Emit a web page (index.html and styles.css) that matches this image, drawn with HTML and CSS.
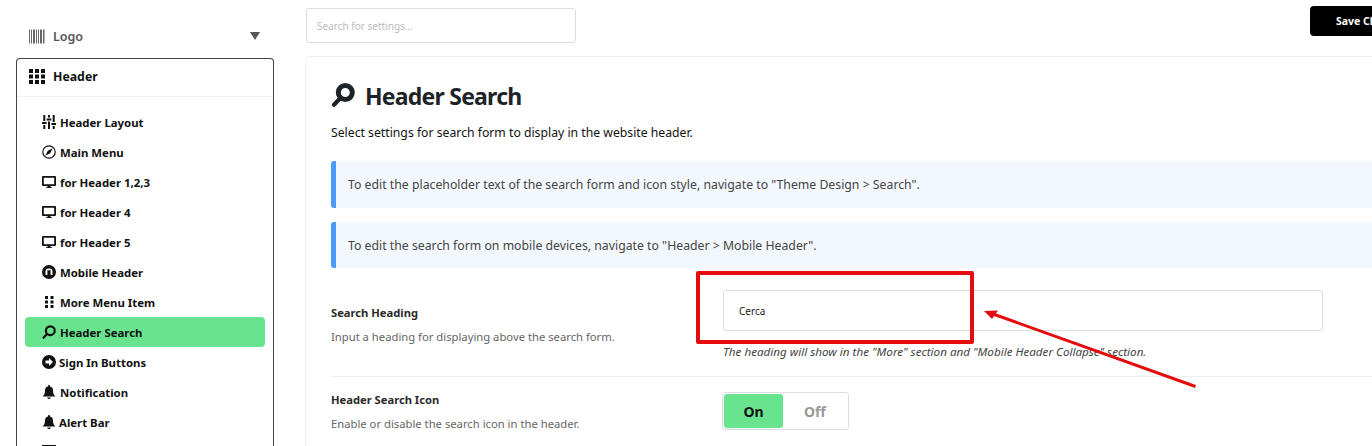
FILE: index.html
```html
<!DOCTYPE html>
<html lang="en">
<head>
<meta charset="utf-8">
<title>Header Search</title>
<link rel="stylesheet" href="styles.css">
</head>
<body>
<div class="page">
  <aside class="sidebar">
    <div class="group-closed">
      <svg class="gicon" viewBox="0 0 16 14"><path d="M0 0h1v14H0zM2 0h1v14H2zM4 0h2v14H4zM7 0h1v14H7zM9 0h1v14H9zM11 0h2v14h-2zM14 0h1.500v14H14z"/></svg>
      <span class="group-name">Logo</span>
      <svg class="caret" viewBox="0 0 10 8"><path d="M0 0h10L5 8z"/></svg>
    </div>
    <div class="group">
      <div class="group-head">
        <svg class="gicon dark" viewBox="0 0 16 15"><path d="M0 0h4v4H0zM6 0h4v4H6zM12 0h4v4h-4zM0 5.500h4v4H0zM6 5.500h4v4H6zM12 5.500h4v4h-4zM0 11h4v4H0zM6 11h4v4H6zM12 11h4v4h-4z"/></svg>
        <span>Header</span>
      </div>
      <nav class="items">
        <a class="item"><svg class="icon" viewBox="0 0 14 14"><path d="M1.300 0h2v6h-2zM0 7h4.600v2H0zM1.300 10h2v4h-2zM6 0h2v2.500H6zM4.700 3.500h4.600v2H4.700zM6 6.500h2V14H6zM10.700 0h2v7h-2zM9.400 8H14v2H9.400zM10.700 11h2v3h-2z"/></svg>Header Layout</a>
        <a class="item"><svg class="icon" viewBox="0 0 14 14"><circle class="ring" cx="7" cy="7" r="6.200"/><path d="M10.700 3.300 8.200 8.200 3.300 10.700 5.800 5.800z"/></svg>Main Menu</a>
        <a class="item"><svg class="icon" viewBox="0 0 14 14"><path fill-rule="evenodd" d="M1 1h12a1 1 0 0 1 1 1v8a1 1 0 0 1-1 1H8.500v1.200H10V13H4v-.8h1.500V11H1a1 1 0 0 1-1-1V2a1 1 0 0 1 1-1zm.8 1.800v6.400h10.400V2.800z"/></svg>for Header 1,2,3</a>
        <a class="item"><svg class="icon" viewBox="0 0 14 14"><path fill-rule="evenodd" d="M1 1h12a1 1 0 0 1 1 1v8a1 1 0 0 1-1 1H8.500v1.200H10V13H4v-.8h1.500V11H1a1 1 0 0 1-1-1V2a1 1 0 0 1 1-1zm.8 1.800v6.400h10.400V2.800z"/></svg>for Header 4</a>
        <a class="item"><svg class="icon" viewBox="0 0 14 14"><path fill-rule="evenodd" d="M1 1h12a1 1 0 0 1 1 1v8a1 1 0 0 1-1 1H8.500v1.200H10V13H4v-.8h1.500V11H1a1 1 0 0 1-1-1V2a1 1 0 0 1 1-1zm.8 1.800v6.400h10.400V2.800z"/></svg>for Header 5</a>
        <a class="item"><svg class="icon" viewBox="0 0 14 14"><path fill-rule="evenodd" d="M7 0a7 7 0 1 1 0 14A7 7 0 0 1 7 0zM3.500 10V6.500a3 3 0 0 1 3-3h1a3 3 0 0 1 3 3V10H8.600V5.300H5.400V10z"/></svg>Mobile Header</a>
        <a class="item"><svg class="icon" viewBox="0 0 14 14"><path d="M3 1h3v3H3zM8.500 1h3v3h-3zM3 5.500h3v3H3zM8.500 5.500h3v3h-3zM3 10h3v3H3zM8.500 10h3v3h-3z"/></svg>More Menu Item</a>
        <a class="item active"><svg class="icon" viewBox="0 0 14 14"><circle class="lens" cx="8.300" cy="5.700" r="4.400"/><path class="grip" d="M4.800 9.300 1.500 12.800"/></svg>Header Search</a>
        <a class="item tight"><svg class="icon" viewBox="0 0 14 14"><path fill-rule="evenodd" d="M7 0a7 7 0 1 1 0 14A7 7 0 0 1 7 0zM7 3v2.500H3.500v3H7V11l4-4z"/></svg>Sign In Buttons</a>
        <a class="item"><svg class="icon" viewBox="0 0 14 14"><path d="M7 0a1 1 0 0 1 1 1v.6a4 4 0 0 1 3 3.900c0 3.500 1 4.700 2.500 6H.5C2 10.200 3 9 3 5.500a4 4 0 0 1 3-3.900V1a1 1 0 0 1 1-1zM5.300 12.500h3.400A1.700 1.500 0 0 1 7 14a1.700 1.500 0 0 1-1.700-1.500z"/></svg>Notification</a>
        <a class="item tight"><svg class="icon" viewBox="0 0 14 14"><path d="M7 0a1 1 0 0 1 1 1v.6a4 4 0 0 1 3 3.900c0 3.500 1 4.700 2.500 6H.5C2 10.200 3 9 3 5.500a4 4 0 0 1 3-3.900V1a1 1 0 0 1 1-1zM5.300 12.500h3.400A1.700 1.500 0 0 1 7 14a1.700 1.500 0 0 1-1.700-1.500z"/></svg>Alert Bar</a>
        <a class="item"><svg class="icon" viewBox="0 0 14 14"><path d="M0 0h14v14H0z"/></svg></a>
      </nav>
    </div>
  </aside>
  <main class="main">
    <div class="topbar">
      <input class="search" type="text" placeholder="Search for settings...">
      <div class="save">Save Changes</div>
    </div>
    <section class="card">
      <h1 class="title"><svg class="title-icon" viewBox="0 0 24 24"><circle class="title-ring" cx="14.300" cy="9.500" r="7"/><path class="title-grip" d="M8 16.500 3 21.800"/></svg>Header Search</h1>
      <p class="lead">Select settings for search form to display in the website header.</p>
      <div class="notice">To edit the placeholder text of the search form and icon style, navigate to "Theme Design &gt; Search".</div>
      <div class="notice">To edit the search form on mobile devices, navigate to "Header &gt; Mobile Header".</div>
      <div class="row heading-row">
        <div class="label">
          <h3>Search Heading</h3>
          <p>Input a heading for displaying above the search form.</p>
        </div>
        <div class="control">
          <input class="text" type="text" value="Cerca">
          <p class="hint">The heading will show in the "More" section and "Mobile Header Collapse" section.</p>
        </div>
      </div>
      <div class="row icon-row">
        <div class="label">
          <h3>Header Search Icon</h3>
          <p>Enable or disable the search icon in the header.</p>
        </div>
        <div class="control">
          <div class="toggle"><span class="on">On</span><span class="off">Off</span></div>
        </div>
      </div>
    </section>
  </main>
</div>
<div class="mark"></div>
<svg class="arrow" viewBox="0 0 1372 446"><path class="shaft" d="M1195.500 386.500 993 314"/><path class="head" d="M984 311 998 310.500 992 319z"/></svg>
</body>
</html>
```
FILE: styles.css
```css
* { box-sizing: border-box; }
html, body { margin: 0; height: 446px; overflow: hidden; background: #fff; }
body { font-family: "Noto Sans", "Open Sans", sans-serif; color: #111; position: relative; }

.page { display: flex; height: 446px; width: 1372px; overflow: hidden; }

.sidebar { width: 305px; height: 446px; flex: none; padding: 24px 0 0 16px; overflow: hidden; }
.group-closed { display: flex; align-items: center; width: 258px; height: 24px; padding: 0 14px 0 13px; margin-bottom: 10px; color: #555; font-size: 12.500px; font-weight: 600; }
.gicon { width: 16px; height: 15px; margin-right: 8px; fill: #666; flex: none; }
.gicon.dark { fill: #111; }
.group-name { flex: 1; }
.caret { width: 10px; height: 8px; fill: #555; }

.group { width: 258px; height: 388px; border: 1px solid #444; border-bottom: 0; border-radius: 4px 4px 0 0; overflow: hidden; }
.group-head { display: flex; align-items: center; height: 38px; padding: 0 12px 2px; font-size: 12.300px; font-weight: 700; color: #111; border-bottom: 1px solid #f2f2f2; }
.items { padding: 10px 8px 0; }
.item { display: flex; align-items: center; height: 30px; padding: 0 17px; font-size: 11.400px; font-weight: 700; color: #111; border-radius: 4px; }
.item.tight .icon { margin-right: 3px; }
.item.active { background: #68e48f; }
.icon { width: 14px; height: 14px; margin-right: 4px; fill: #111; flex: none; }
.ring { fill: none; stroke: #111; stroke-width: 1.200; }
.lens { fill: none; stroke: #111; stroke-width: 2.200; }
.grip { fill: none; stroke: #111; stroke-width: 2.200; stroke-linecap: round; }

.main { flex: 1; min-width: 0; height: 446px; overflow: hidden; }
.topbar { display: flex; align-items: flex-start; justify-content: space-between; height: 56px; padding: 6px 0 0 1px; }
.search { width: 270px; height: 35px; margin-top: 2px; padding: 0 10px; border: 1px solid #ddd; border-radius: 3px; font: 10px "Noto Sans", sans-serif; }
.search::placeholder { color: #bbb; opacity: 1; }
.save { width: 62px; height: 30px; flex: none; overflow: hidden; border-radius: 4px 0 0 4px; background: #000; color: #fff; font-size: 10.500px; font-weight: 700; line-height: 30px; white-space: nowrap; padding-left: 26px; }

.card { margin-right: -40px; height: 390px; padding: 24px 26px 0 25px; border: 1px solid #eee; border-bottom: 0; border-radius: 5px 0 0 0; }
.title { display: flex; align-items: center; height: 30px; margin: 0 0 13px; font-size: 23px; font-weight: 700; letter-spacing: -.77px; color: #1d2327; line-height: 30px; }
.title-icon { width: 24px; height: 24px; margin: 0 10px 3px 0; flex: none; }
.title-ring { fill: none; stroke: #1d2327; stroke-width: 5; }
.title-grip { fill: none; stroke: #1d2327; stroke-width: 4.200; stroke-linecap: round; }
.lead { margin: 0 0 19px; font-size: 12.230px; line-height: 18px; color: #111; }
.notice { display: flex; align-items: center; height: 47px; padding: 0 0 0 12px; margin-bottom: 14px; background: #f3f8fe; border-left: 5px solid #4b9bfa; border-radius: 3px; font-size: 12.270px; color: #444; white-space: nowrap; }
.notice + .notice { height: 46px; margin-bottom: 22px; }

.row { display: flex; }
.heading-row { height: 87px; border-bottom: 1px solid #eee; }
.icon-row { padding-top: 15px; }
.label { width: 392px; flex: none; }
.heading-row .label { padding-top: 14px; }
.icon-row .label { margin-top: -1px; }
.label h3 { margin: 0 0 6px; font-size: 11.200px; font-weight: 700; line-height: 18px; color: #2a2a2a; }
.label p { margin: 0; font-size: 11.250px; line-height: 18px; color: #666; }
.control { flex: 1; min-width: 0; }
.text { display: block; width: 600px; height: 41px; padding: 0 15px; border: 1px solid #ddd; border-radius: 3px; font: 10px "Noto Sans", sans-serif; color: #222; }
.hint { margin: 12px 0 0; font-size: 11.650px; line-height: 18px; font-style: italic; color: #444; white-space: nowrap; }

.toggle { display: flex; width: 127px; height: 38px; margin-left: -1px; padding: 1px; border: 1px solid #ddd; border-radius: 3px; font-size: 14px; font-weight: 700; }
.toggle span { display: flex; align-items: center; justify-content: center; }
.on { width: 59px; background: #68e48f; border-radius: 3px; color: #111; }
.off { flex: 1; color: #999; }

.mark { position: absolute; left: 696px; top: 271px; width: 278px; height: 73px; border: 4px solid #e40c0c; border-radius: 2px; }
.arrow { position: absolute; left: 0; top: 0; width: 1372px; height: 446px; pointer-events: none; }
.shaft { fill: none; stroke: #e40c0c; stroke-width: 3; }
.head { fill: #e40c0c; }
```
